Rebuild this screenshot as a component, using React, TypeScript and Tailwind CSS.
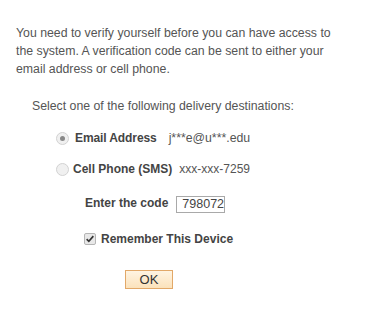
import React, { useState } from 'react';

export default function App() {
  const [dest, setDest] = useState<'email' | 'sms'>('email');
  const [code, setCode] = useState('798072');
  const [remember, setRemember] = useState(true);

  return (
    <div className="w-[374px] h-[328px] bg-white font-['Liberation_Sans',Arial,sans-serif] text-[#555]">
      <div className="pt-[24px] pl-[16px] pr-[20px]">
        {/* Intro */}
        <p className="text-[12.3px] leading-[18px] w-[330px]">
          You need to verify yourself before you can have access to the system. A verification code can be sent to either your email address or cell phone.
        </p>

        {/* Destinations */}
        <p className="mt-[19px] ml-[16px] text-[12.3px] leading-[18px]">Select one of the following delivery destinations:</p>

        <div className="ml-[40px] mt-[14px] flex flex-col gap-[13px]">
          <label className="flex items-center h-[18px]" onClick={() => setDest('email')}>
            <span className="w-[13px] h-[13px] rounded-full border border-[#d2d2d2] bg-[#f0f0f0] flex items-center justify-center">
              {dest === 'email' && <span className="w-[5px] h-[5px] rounded-full bg-[#888]" />}
            </span>
            <span className="ml-[6px] text-[12px] font-bold text-[#444] tracking-[-0.1px]">Email Address</span>
            <span className="ml-[12px] text-[12.3px] text-[#555]">j***e@u***.edu</span>
          </label>
          <label className="flex items-center h-[18px]" onClick={() => setDest('sms')}>
            <span className="w-[13px] h-[13px] rounded-full border border-[#d2d2d2] bg-[#f0f0f0] flex items-center justify-center">
              {dest === 'sms' && <span className="w-[5px] h-[5px] rounded-full bg-[#888]" />}
            </span>
            <span className="ml-[4px] text-[12px] font-bold text-[#444]">Cell Phone (SMS)</span>
            <span className="ml-[7px] text-[12px] text-[#555]">xxx-xxx-7259</span>
          </label>
        </div>

        {/* Code */}
        <div className="ml-[69px] mt-[15px] flex items-center">
          <span className="text-[12px] font-bold text-[#444]">Enter the code</span>
          <input
            value={code}
            onChange={(e) => setCode(e.target.value)}
            className="ml-[8px] mt-[3px] w-[49px] h-[17px] border border-[#a9a9a9] pl-[5px] pr-0 text-[12.5px] text-[#444] outline-none"
          />
        </div>

        <label className="ml-[68px] mt-[17px] flex items-center" onClick={() => setRemember(!remember)}>
          <span className="w-[12px] h-[12px] border border-[#b5b5b5] bg-[#e8e8e8] rounded-[2px] flex items-center justify-center">
            {remember && (
              <svg viewBox="0 0 12 12" className="w-[10px] h-[10px]">
                <path d="M2 6.2 L4.6 8.8 L10 2.6" fill="none" stroke="#333" strokeWidth="2" />
              </svg>
            )}
          </span>
          <span className="ml-[5px] text-[12px] font-bold text-[#444]">Remember This Device</span>
        </label>

        <button className="ml-[109px] mt-[22px] w-[48px] h-[19px] border border-[#e2a868] bg-gradient-to-b from-[#fff4e2] to-[#fbe2bb] text-[13px] text-[#333] leading-none">
          OK
        </button>
      </div>
    </div>
  );
}
